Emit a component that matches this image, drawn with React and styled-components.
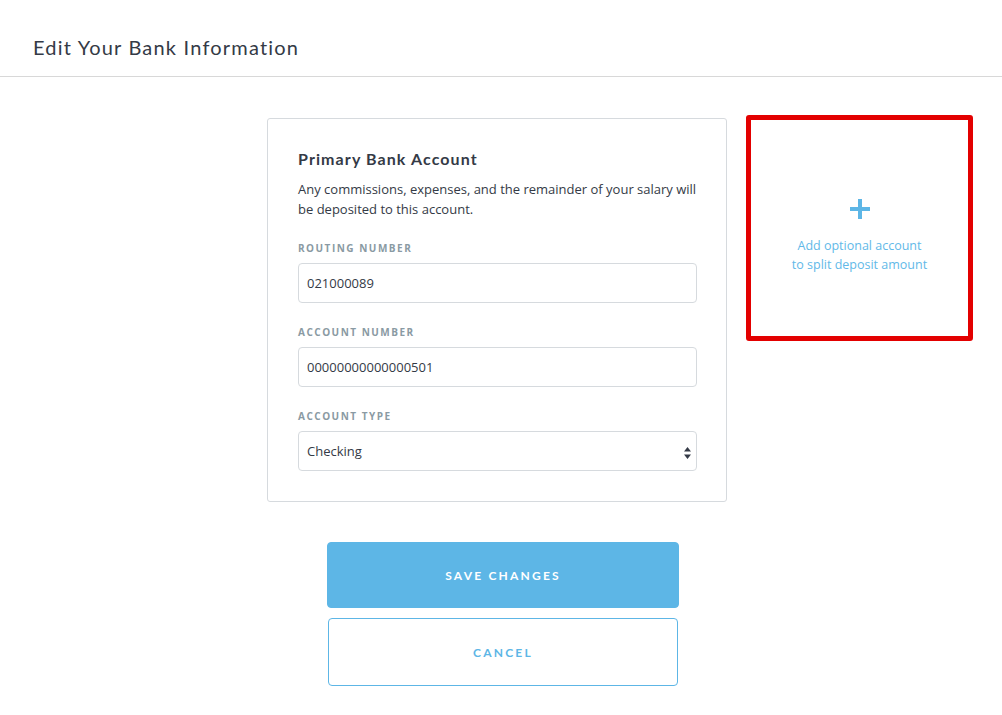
import React from 'react';
import styled, { createGlobalStyle } from 'styled-components';

const colors = {
  text: '#343a46',
  muted: '#8a9aa3',
  border: '#d6dade',
  blue: '#5db6e6',
  red: '#e30000',
};

const GlobalStyle = createGlobalStyle`
  html, body {
    margin: 0;
    padding: 0;
    background: #fff;
    font-family: "Open Sans", "Liberation Sans", sans-serif;
    color: ${colors.text};
  }
`;

const Header = styled.header`
  height: 77px;
  border-bottom: 1px solid #d8d8d8;
  display: flex;
  align-items: center;
  padding-left: 33px;
  box-sizing: border-box;
`;

const PageTitle = styled.h1`
  margin: 18px 0 0;
  font-family: "Lato", sans-serif;
  font-weight: 400;
  font-size: 20px;
  letter-spacing: 1.2px;
  color: ${colors.text};
`;

const Main = styled.main`
  display: grid;
  grid-template-columns: 267px 460px 19px 227px;
  padding-top: 41px;
`;

const Card = styled.section`
  grid-column: 2;
  align-self: start;
  border: 1px solid ${colors.border};
  border-radius: 3px;
  padding: 30px 29px 30px 30px;
  box-sizing: border-box;
`;

const CardTitle = styled.h2`
  margin: 0;
  font-family: "Lato", sans-serif;
  font-weight: 700;
  font-size: 16px;
  letter-spacing: 1.1px;
  line-height: 20px;
`;

const Description = styled.p`
  margin: 10px 0 0;
  font-size: 13px;
  line-height: 20px;
  color: ${colors.text};
`;

const Field = styled.div`
  margin-top: 22px;
`;

const Label = styled.div`
  font-family: "Open Sans", sans-serif;
  font-weight: 700;
  font-size: 10px;
  letter-spacing: 1.5px;
  color: ${colors.muted};
  line-height: 14px;
  margin-bottom: 8px;
`;

const Input = styled.div`
  height: 40px;
  border: 1px solid ${colors.border};
  border-radius: 4px;
  box-sizing: border-box;
  display: flex;
  align-items: center;
  justify-content: space-between;
  padding: 0 5px 0 8px;
  font-size: 13px;
  color: ${colors.text};
`;

const Arrows = styled.svg`
  width: 7px;
  height: 12px;
  margin-top: 3px;
`;

const AddBox = styled.div`
  grid-column: 4;
  align-self: start;
  margin-top: -3px;
  height: 226px;
  border: 5px solid ${colors.red};
  border-radius: 3px;
  box-sizing: border-box;
  display: flex;
  flex-direction: column;
  align-items: center;
  padding-top: 79px;
`;

const Plus = styled.svg`
  width: 20px;
  height: 20px;
`;

const AddText = styled.div`
  margin-top: 17px;
  font-size: 12.5px;
  line-height: 19px;
  color: #62b9e8;
  text-align: center;
`;

const Buttons = styled.div`
  grid-column: 2 / span 3;
  margin: 40px 0 0 60px;
  width: 352px;
  display: flex;
  flex-direction: column;
  align-items: center;
  gap: 10px;
`;

const Button = styled.button`
  width: ${(p) => p.$primary ? '352px' : '350px'};
  height: ${(p) => p.$primary ? '66px' : '68px'};
  border-radius: 4px;
  border: 1px solid ${colors.blue};
  background: ${(p) => p.$primary ? colors.blue : '#fff'};
  color: ${(p) => p.$primary ? '#fff' : colors.blue};
  font-family: "Lato", sans-serif;
  font-weight: 700;
  font-size: 12px;
  letter-spacing: 2.2px;
  cursor: pointer;
`;

const App = () => {
  return (
    <>
      <GlobalStyle />
      <Header>
        <PageTitle>Edit Your Bank Information</PageTitle>
      </Header>
      <Main>
        <Card>
          <CardTitle>Primary Bank Account</CardTitle>
          <Description>
            Any commissions, expenses, and the remainder of your salary will
            be deposited to this account.
          </Description>
          <Field>
            <Label>ROUTING NUMBER</Label>
            <Input>021000089</Input>
          </Field>
          <Field>
            <Label>ACCOUNT NUMBER</Label>
            <Input>00000000000000501</Input>
          </Field>
          <Field>
            <Label>ACCOUNT TYPE</Label>
            <Input>
              Checking
              <Arrows viewBox="0 0 7 12">
                <path d="M3.5 0 L7 4.5 H0 Z M3.5 12 L0 7.5 H7 Z" fill="#343a46" />
              </Arrows>
            </Input>
          </Field>
        </Card>
        <AddBox>
          <Plus viewBox="0 0 20 20">
            <path d="M8 0 H12 V8 H20 V12 H12 V20 H8 V12 H0 V8 H8 Z" fill={colors.blue} />
          </Plus>
          <AddText>
            Add optional account
            <br />
            to split deposit amount
          </AddText>
        </AddBox>
        <Buttons>
          <Button $primary>SAVE CHANGES</Button>
          <Button>CANCEL</Button>
        </Buttons>
      </Main>
    </>
  );
};

export default App;
